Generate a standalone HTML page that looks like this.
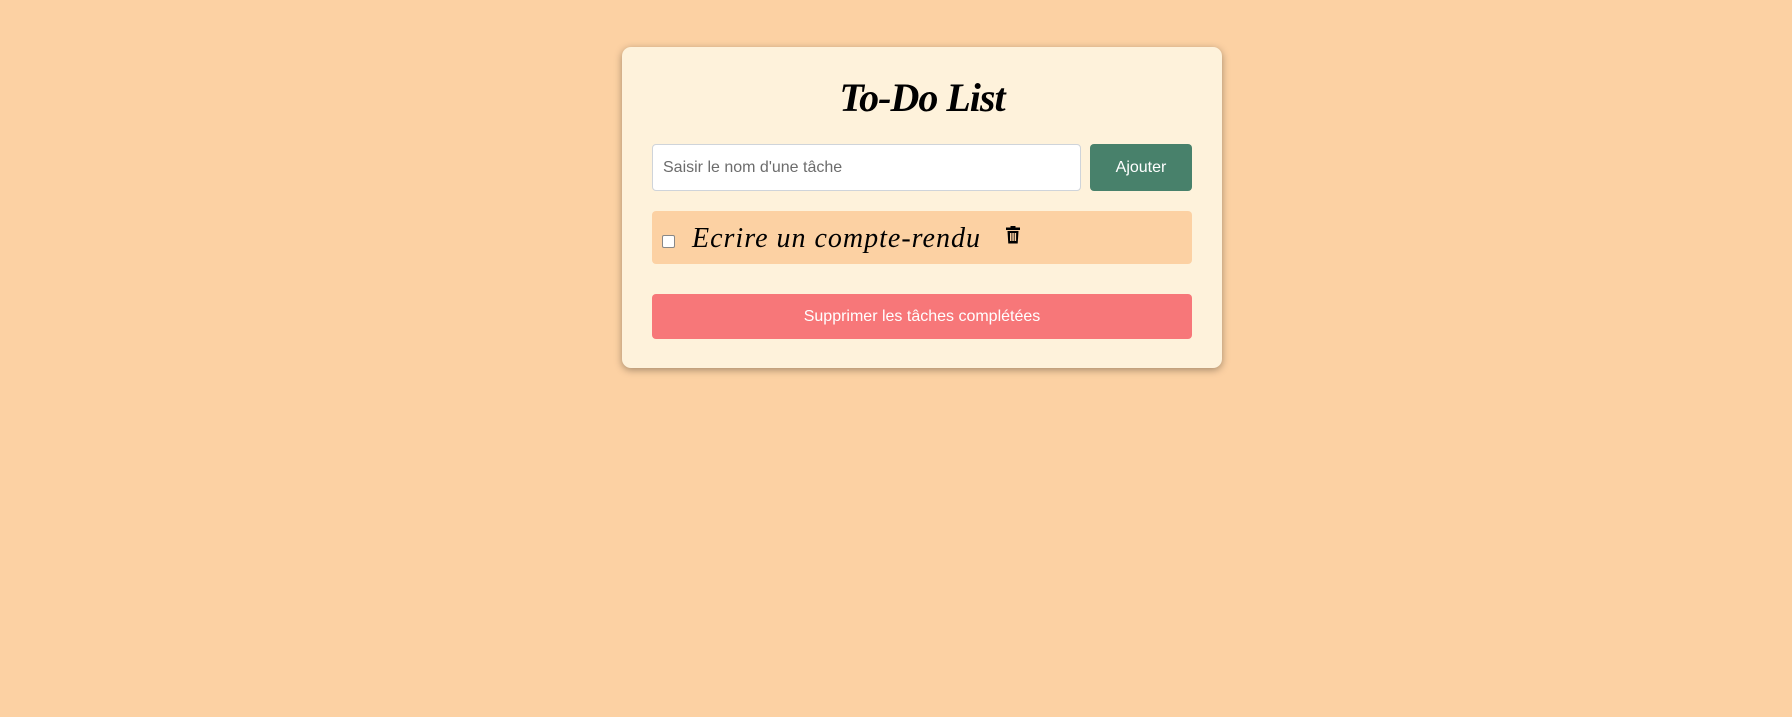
<!DOCTYPE html>
<html><head><meta charset="utf-8"><style>
html,body{margin:0;padding:0}
body{width:1792px;height:717px;background:#fcd1a3;position:relative;overflow:hidden;font-family:"Liberation Sans",sans-serif}
.card{position:absolute;left:622px;top:47px;width:600px;height:321px;background:#fef2db;border-radius:9px;box-shadow:0 2px 8px rgba(0,0,0,.35)}
h1{position:absolute;left:0;width:600px;top:27px;margin:0;text-align:center;font:italic bold 40px "Liberation Serif",serif;color:#000;letter-spacing:-1px}
.inp{position:absolute;left:30px;top:97px;width:429px;height:47px;background:#fff;border:1px solid #cfd4da;border-radius:4px;box-sizing:border-box;font-size:16px;color:#6c6c6c;line-height:45px;padding-left:10px}
.add{position:absolute;left:468px;top:97px;width:102px;height:47px;background:#48816b;border-radius:4px;color:#fff;font-size:16px;line-height:47px;text-align:center}
.row{position:absolute;left:30px;top:164px;width:540px;height:53px;background:#fcd1a3;border-radius:4px}
.cb{position:absolute;left:10px;top:24px;width:11px;height:11px;border:1.5px solid #888;background:#fff;border-radius:2px}
.txt{position:absolute;left:40px;top:12px;font:italic 28px "Liberation Serif",serif;color:#000;letter-spacing:1px}
.trash{position:absolute;left:354px;top:15px}
.del{position:absolute;left:30px;top:247px;width:540px;height:45px;background:#f77779;border-radius:4px;color:#fff;font-size:16px;line-height:45px;text-align:center}
</style></head><body>
<div class="card">
<h1>To-Do List</h1>
<div class="inp">Saisir le nom d'une tâche</div>
<div class="add">Ajouter</div>
<div class="row"><div class="cb"></div><div class="txt">Ecrire un compte-rendu</div>
<svg class="trash" width="14" height="18" viewBox="0 0 14 18"><rect x="0" y="1.5" width="14" height="2.5" fill="#000"/><rect x="4.5" y="0" width="5" height="2" fill="#000"/><path d="M1.5 5h11l-.8 12.5H2.3z" fill="#000"/><rect x="4" y="7" width="1.5" height="8" fill="#fcd1a3"/><rect x="6.3" y="7" width="1.5" height="8" fill="#fcd1a3"/><rect x="8.6" y="7" width="1.5" height="8" fill="#fcd1a3"/></svg>
</div>
<div class="del">Supprimer les tâches complétées</div>
</div>
</body></html>
